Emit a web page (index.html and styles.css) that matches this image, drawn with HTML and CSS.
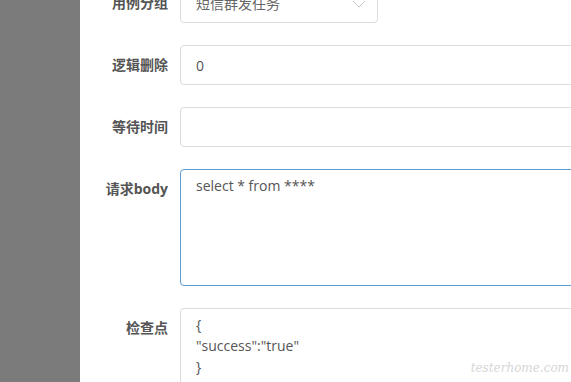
FILE: index.html
```html
<!DOCTYPE html>
<html lang="zh-CN">
<head>
<meta charset="UTF-8">
<meta name="viewport" content="width=device-width, initial-scale=1.0">
<title>编辑用例</title>
<link rel="stylesheet" href="styles.css">
</head>

<body>

<div class="page">
    <div class="backdrop"></div>

    <div class="dialog">
        <form class="case-form">
            <div class="form-row">
                <label class="form-label">用例分组</label>
                <div class="select-box">
                    <span class="select-text">短信群发任务</span>
                    <svg class="select-arrow" width="14" height="8" viewBox="0 0 14 8">
                        <path d="M1 1 L7 7 L13 1" fill="none" stroke="#c8c8c8" stroke-width="1"/>
                    </svg>
                </div>
            </div>

            <div class="form-row">
                <label class="form-label" for="logicDelete">逻辑删除</label>
                <input class="form-input" type="text" id="logicDelete" value="0">
            </div>

            <div class="form-row">
                <label class="form-label" for="waitTime">等待时间</label>
                <input class="form-input" type="text" id="waitTime" value="">
            </div>

            <div class="form-row">
                <label class="form-label" for="reqBody">请求body</label>
                <textarea class="form-textarea is-focus" id="reqBody">select * from ****</textarea>
            </div>

            <div class="form-row">
                <label class="form-label" for="checkPoint">检查点</label>
                <textarea class="form-textarea" id="checkPoint">{
"success":"true"
}</textarea>
            </div>
        </form>

        <!-- watermark from the screenshot source -->
        <div class="watermark">testerhome.com</div>
    </div>
</div>

</body>
</html>
```

FILE: styles.css
```css
html, body {
    margin: 0;
    height: 100%;
    overflow: hidden;
}

body {
    font-family: "Open Sans", "Noto Sans CJK SC", Arial, sans-serif;
    font-size: 14px;
    color: #555;
    background-color: #fff;
}

.page {
    display: flex;
    height: 100vh;
}

.backdrop {
    flex: 0 0 80px;
    background-color: #7b7b7b;
}

.dialog {
    flex: 1;
    min-width: 0;
    overflow: hidden;
    position: relative;
    background-color: #fff;
}

.case-form {
    margin-top: -17px;
}

.form-row {
    display: flex;
    align-items: flex-start;
    margin-bottom: 22px;
}

.form-label {
    flex: 0 0 88px;
    padding-right: 12px;
    text-align: right;
    line-height: 40px;
    font-weight: bold;
    color: #555;
}

.select-box {
    display: flex;
    align-items: center;
    justify-content: space-between;
    box-sizing: border-box;
    flex: 0 0 198px;
    height: 40px;
    padding: 0 11px 0 15px;
    border: 1px solid #dcdcdc;
    border-radius: 4px;
    color: #666;
}

.select-arrow {
    margin-top: 2px;
}

.form-input {
    box-sizing: border-box;
    flex: 0 0 440px;
    height: 40px;
    padding: 0 15px;
    border: 1px solid #dcdcdc;
    border-radius: 4px;
    font-family: inherit;
    font-size: 14px;
    color: #555;
    outline: none;
}

.form-textarea {
    box-sizing: border-box;
    flex: 0 0 440px;
    height: 117px;
    padding: 5px 15px;
    border: 1px solid #dcdcdc;
    border-radius: 4px;
    font-family: inherit;
    font-size: 14px;
    line-height: 21px;
    color: #555;
    resize: none;
    outline: none;
}

.form-textarea.is-focus {
    border-color: #5b9dd4;
}

.watermark {
    position: absolute;
    right: 2px;
    bottom: 7px;
    font-family: "DejaVu Serif", serif;
    font-style: italic;
    font-size: 12px;
    color: #d6d6d6;
}
```
